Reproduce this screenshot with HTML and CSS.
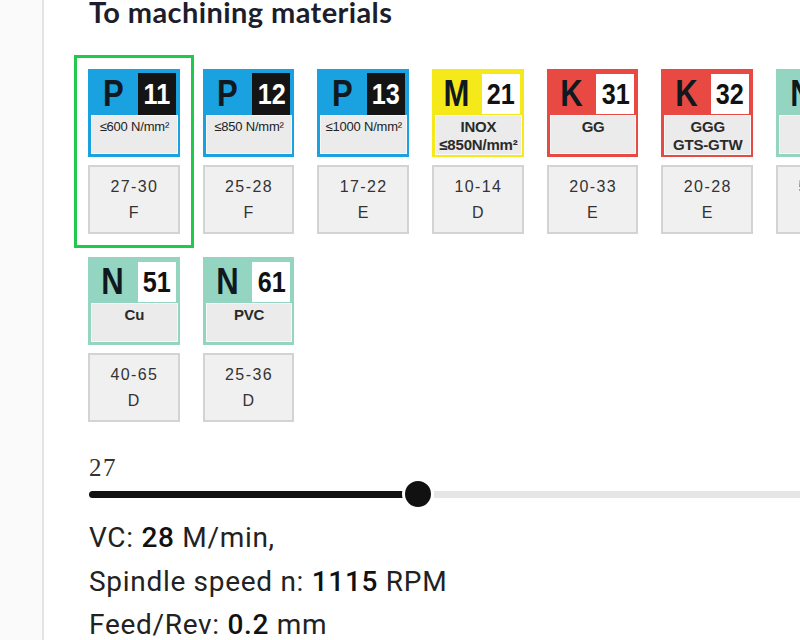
FILE: index.html
```html
<!DOCTYPE html>
<html lang="en">
<head>
<meta charset="utf-8">
<title>Machining materials</title>
<link rel="stylesheet" href="styles.css">
</head>
<body>
<div class="page">
  <aside class="rail"></aside>
  <main class="content">
    <h2 class="title">To machining materials</h2>
    <div class="grid">
      <div class="tile selected">
        <div class="badge badge-p">
          <div class="badge-top"><span class="letter"><span class="glyph">P</span></span><span class="num num-dark"><span class="glyph">11</span></span></div>
          <div class="panel"><span class="spec">≤600 N/mm²</span></div>
        </div>
        <div class="range"><span>27-30</span><span>F</span></div>
      </div>
      <div class="tile">
        <div class="badge badge-p">
          <div class="badge-top"><span class="letter"><span class="glyph">P</span></span><span class="num num-dark"><span class="glyph">12</span></span></div>
          <div class="panel"><span class="spec">≤850 N/mm²</span></div>
        </div>
        <div class="range"><span>25-28</span><span>F</span></div>
      </div>
      <div class="tile">
        <div class="badge badge-p">
          <div class="badge-top"><span class="letter"><span class="glyph">P</span></span><span class="num num-dark"><span class="glyph">13</span></span></div>
          <div class="panel"><span class="spec">≤1000 N/mm²</span></div>
        </div>
        <div class="range"><span>17-22</span><span>E</span></div>
      </div>
      <div class="tile">
        <div class="badge badge-m">
          <div class="badge-top"><span class="letter"><span class="glyph">M</span></span><span class="num"><span class="glyph">21</span></span></div>
          <div class="panel"><span class="name">INOX</span><span class="name">≤850N/mm²</span></div>
        </div>
        <div class="range"><span>10-14</span><span>D</span></div>
      </div>
      <div class="tile">
        <div class="badge badge-k">
          <div class="badge-top"><span class="letter"><span class="glyph">K</span></span><span class="num"><span class="glyph">31</span></span></div>
          <div class="panel"><span class="name">GG</span></div>
        </div>
        <div class="range"><span>20-33</span><span>E</span></div>
      </div>
      <div class="tile">
        <div class="badge badge-k">
          <div class="badge-top"><span class="letter"><span class="glyph">K</span></span><span class="num"><span class="glyph">32</span></span></div>
          <div class="panel"><span class="name">GGG</span><span class="name">GTS-GTW</span></div>
        </div>
        <div class="range"><span>20-28</span><span>E</span></div>
      </div>
      <div class="tile">
        <div class="badge badge-n">
          <div class="badge-top"><span class="letter"><span class="glyph">N</span></span><span class="num"><span class="glyph">41</span></span></div>
          <div class="panel"><span class="name">Al</span></div>
        </div>
        <div class="range"><span>50-80</span><span>D</span></div>
      </div>
      <div class="tile">
        <div class="badge badge-n">
          <div class="badge-top"><span class="letter"><span class="glyph">N</span></span><span class="num"><span class="glyph">51</span></span></div>
          <div class="panel"><span class="name">Cu</span></div>
        </div>
        <div class="range"><span>40-65</span><span>D</span></div>
      </div>
      <div class="tile">
        <div class="badge badge-n">
          <div class="badge-top"><span class="letter"><span class="glyph">N</span></span><span class="num"><span class="glyph">61</span></span></div>
          <div class="panel"><span class="name">PVC</span></div>
        </div>
        <div class="range"><span>25-36</span><span>D</span></div>
      </div>
    </div>

    <div class="slider">
      <div class="slider-value">27</div>
      <div class="track">
        <div class="fill" style="width:316px"></div>
        <div class="thumb"></div>
        <div class="rest"></div>
      </div>
    </div>

    <div class="results">
      <p class="result">VC: <b>28</b> M/min,</p>
      <p class="result">Spindle speed n: <b>1115</b> RPM</p>
      <p class="result">Feed/Rev: <b>0.2</b> mm</p>
    </div>
  </main>
</div>
</body>
</html>
```

FILE: styles.css
```css
html, body {
  margin: 0;
  padding: 0;
  background: #ffffff;
  overflow: hidden;
}

.page {
  display: flex;
  width: 800px;
  height: 640px;
  overflow: hidden;
}

.rail {
  flex: 0 0 42px;
  background: #fafafa;
  border-right: 2px solid #e4e4e4;
}

.content {
  flex: 1 0 auto;
  padding-left: 44px;
  min-width: 0;
}

.title {
  margin: -3px 0 0 1px;
  font-family: Lato, "Open Sans", sans-serif;
  font-weight: 700;
  font-size: 29px;
  line-height: 30px;
  letter-spacing: 0.4px;
  color: #1d1d2b;
}

.grid {
  display: grid;
  grid-template-columns: repeat(7, 91.7px);
  column-gap: 23px;
  row-gap: 23px;
  margin-top: 42px;
  width: 780px;
}

.tile {
  display: flex;
  flex-direction: column;
  gap: 8px;
}

.tile.selected {
  outline: 3px solid #1fc94b;
  outline-offset: 11px;
}

.badge {
  height: 88px;
  box-sizing: border-box;
  padding: 4px 2px 3px 2px;
  display: flex;
  flex-direction: column;
}

.badge-p { background: #1aa1e0; }
.badge-m { background: #f6e91a; }
.badge-k { background: #e84a43; }
.badge-n { background: #93d5c1; }

.badge-top {
  height: 42px;
  display: flex;
  align-items: center;
}

.glyph {
  display: inline-block;
  transform: scaleX(0.84);
}

.letter {
  flex: 1;
  text-align: center;
  font-family: "Liberation Sans", Arial, sans-serif;
  font-weight: 700;
  font-size: 37px;
  line-height: 42px;
  color: #101820;
  padding-right: 2px;
}

.num {
  width: 38px;
  height: 40px;
  margin-right: 2px;
  background: #ffffff;
  color: #111111;
  font-family: "Liberation Sans", Arial, sans-serif;
  font-weight: 700;
  font-size: 30px;
  line-height: 40px;
  text-align: center;
}

.num-dark {
  height: 42px;
  line-height: 42px;
  background: #141414;
  color: #ffffff;
}

.panel {
  flex: 1;
  margin-left: 1px;
  background: #ebebeb;
  border: 1px solid rgba(255, 255, 255, 0.6);
  display: flex;
  flex-direction: column;
  align-items: center;
  padding-top: 2px;
}

.spec {
  font-family: "Liberation Sans", Arial, sans-serif;
  font-size: 13px;
  line-height: 18px;
  color: #222222;
  letter-spacing: -0.2px;
}

.name {
  font-family: "Liberation Sans", Arial, sans-serif;
  font-weight: 700;
  font-size: 15px;
  line-height: 18px;
  color: #2a2a2a;
  letter-spacing: -0.2px;
}

.range {
  height: 69px;
  box-sizing: border-box;
  background: #f0f0f0;
  border: 2px solid #d3d3d3;
  display: flex;
  flex-direction: column;
  align-items: center;
  justify-content: center;
  font-family: "Liberation Sans", Arial, sans-serif;
  font-size: 16px;
  line-height: 26px;
  color: #333333;
  letter-spacing: 1.4px;
  padding-left: 1px;
}

.slider {
  margin-top: 34px;
  margin-left: 1px;
}

.slider-value {
  font-family: "Liberation Serif", "Times New Roman", serif;
  font-size: 25px;
  line-height: 24px;
  letter-spacing: 1.5px;
  color: #333333;
}

.track {
  display: flex;
  align-items: center;
  height: 32px;
  margin-top: -2px;
}

.fill {
  height: 7px;
  background: #111111;
  border-radius: 4px 0 0 4px;
}

.thumb {
  width: 26px;
  height: 26px;
  border-radius: 50%;
  background: #111111;
  border: 3px solid #ffffff;
  margin-left: -3px;
  flex: 0 0 auto;
}

.rest {
  flex: 1;
  height: 7px;
  background: #e6e6e6;
}

.results {
  margin-top: 6px;
  margin-left: 1px;
}

.result {
  margin: 0;
  font-family: Roboto, "Liberation Sans", sans-serif;
  font-size: 28px;
  line-height: 43.5px;
  letter-spacing: 0.7px;
  color: #222222;
}

.result b {
  font-weight: 500;
  color: #111111;
}
```
